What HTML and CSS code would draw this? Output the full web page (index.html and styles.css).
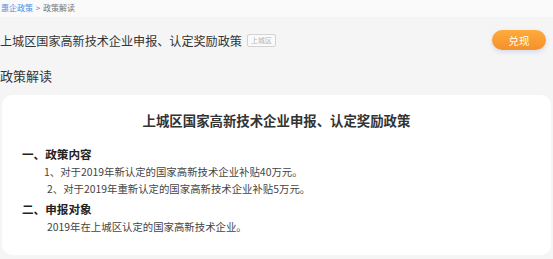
FILE: index.html
```html
<!DOCTYPE html>
<html lang="zh-CN">
<head>
    <meta charset="UTF-8">
    <meta name="viewport" content="width=device-width, initial-scale=1.0">
    <title>政策解读</title>
    <link rel="stylesheet" href="styles.css">
</head>
<body>
    <!-- Breadcrumb -->
    <div class="crumb">
        <a class="crumb-link" href="#">惠企政策</a>
        <span class="crumb-sep">&gt;</span>
        <span>政策解读</span>
    </div>

    <!-- Policy head -->
    <div class="head">
        <div class="head-title">
            <h1>上城区国家高新技术企业申报、认定奖励政策</h1>
            <span class="tag">上城区</span>
        </div>
        <button class="btn-cash" type="button">兑现</button>
    </div>

    <h2 class="section-title">政策解读</h2>

    <!-- Policy card -->
    <div class="card">
        <h3 class="card-title">上城区国家高新技术企业申报、认定奖励政策</h3>

        <h4>一、政策内容</h4>
        <p class="line">1、对于2019年新认定的国家高新技术企业补贴40万元。</p>
        <p class="line line-shift">2、对于2019年重新认定的国家高新技术企业补贴5万元。</p>

        <h4 class="next-block">二、申报对象</h4>
        <p class="line line-shift">2019年在上城区认定的国家高新技术企业。</p>
    </div>
</body>
</html>
```

FILE: styles.css
```css
body {
    margin: 0;
    padding: 0;
    background-color: #f5f5f5;
    color: #333;
    font-family: "Noto Sans CJK SC", "Noto Sans", sans-serif;
}

.crumb {
    height: 17px;
    line-height: 15px;
    padding-left: 1px;
    background-color: #fafafa;
    font-size: 8px;
    color: #777;
}

.crumb-link {
    color: #4a8fe0;
    text-decoration: none;
}

.crumb-sep {
    margin: 0 1px;
}

.head {
    display: flex;
    align-items: center;
    justify-content: space-between;
    height: 46px;
    padding-right: 7px;
}

.head-title {
    display: flex;
    align-items: center;
}

.head-title h1 {
    margin: 0;
    font-size: 12.1px;
    font-weight: normal;
    color: #333;
}

.tag {
    margin-left: 5px;
    padding: 0 3px;
    height: 11px;
    line-height: 11px;
    border: 1px solid #d3d3d3;
    border-radius: 2px;
    font-size: 7px;
    color: #b5b5b5;
    background-color: #fafafa;
}

.btn-cash {
    width: 54px;
    height: 20px;
    border: none;
    border-radius: 10px;
    background: linear-gradient(#fdab3d, #f6902b);
    box-shadow: 0 2px 4px rgba(120, 140, 220, 0.25);
    color: #fff;
    font-family: inherit;
    font-size: 10.5px;
    cursor: pointer;
}

.section-title {
    margin: 0;
    height: 32px;
    line-height: 26px;
    font-size: 13px;
    font-weight: normal;
    color: #333;
}

.card {
    margin: 0 2px;
    height: 160px;
    box-sizing: border-box;
    padding: 15px 20px 0;
    background-color: #fff;
    border-radius: 10px;
}

.card-title {
    margin: 0 0 15px;
    text-align: center;
    font-size: 13.4px;
    line-height: 20px;
    color: #333;
}

.card h4 {
    margin: 0;
    font-size: 11.6px;
    line-height: 18px;
    color: #222;
}

.card .next-block {
    margin-top: 3px;
}

.line {
    margin: 0;
    padding-left: 22px;
    font-size: 10.4px;
    line-height: 17px;
    color: #444;
}

.line-shift {
    padding-left: 25px;
}
```
